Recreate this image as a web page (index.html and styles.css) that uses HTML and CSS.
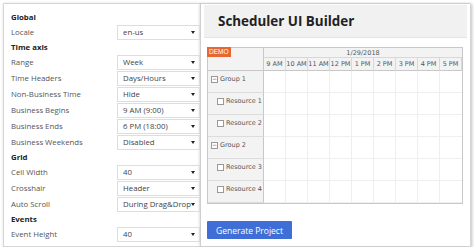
FILE: index.html
```html
<!DOCTYPE html>
<html lang="en">
<head>
    <meta charset="UTF-8">
    <title>Scheduler UI Builder</title>
    <link rel="stylesheet" href="styles.css">
</head>
<body>
    <div class="card">
        <div class="settings">
            <div class="heading">Global</div>
            <div class="row"><span>Locale</span><div class="select">en-us<i></i></div></div>
            <div class="heading">Time axis</div>
            <div class="row"><span>Range</span><div class="select">Week<i></i></div></div>
            <div class="row"><span>Time Headers</span><div class="select">Days/Hours<i></i></div></div>
            <div class="row"><span>Non-Business Time</span><div class="select">Hide<i></i></div></div>
            <div class="row"><span>Business Begins</span><div class="select">9 AM (9:00)<i></i></div></div>
            <div class="row"><span>Business Ends</span><div class="select">6 PM (18:00)<i></i></div></div>
            <div class="row"><span>Business Weekends</span><div class="select">Disabled<i></i></div></div>
            <div class="heading">Grid</div>
            <div class="row"><span>Cell Width</span><div class="select">40<i></i></div></div>
            <div class="row"><span>Crosshair</span><div class="select">Header<i></i></div></div>
            <div class="row"><span>Auto Scroll</span><div class="select">During Drag&amp;Drop<i></i></div></div>
            <div class="heading">Events</div>
            <div class="row"><span>Event Height</span><div class="select">40<i></i></div></div>
        </div>
        <div class="preview">
            <div class="preview-head">Scheduler UI Builder</div>
            <div class="scheduler">
                <span class="demo">DEMO</span>
                <div class="corner"></div>
                <div class="date">1/29/2018</div>
                <div class="hour">9 AM</div>
                <div class="hour">10 AM</div>
                <div class="hour">11 AM</div>
                <div class="hour">12 PM</div>
                <div class="hour">1 PM</div>
                <div class="hour">2 PM</div>
                <div class="hour">3 PM</div>
                <div class="hour">4 PM</div>
                <div class="hour">5 PM</div>
            </div>
            <div class="rows" id="rows"></div>
            <div class="actions">
                <button class="generate">Generate Project</button>
            </div>
        </div>
    </div>

    <script>
        const rows = document.getElementById('rows');
        const resources = [
            ['group', 'Group 1'],
            ['res', 'Resource 1'],
            ['res', 'Resource 2'],
            ['group', 'Group 2'],
            ['res', 'Resource 3'],
            ['res', 'Resource 4']
        ];

        for(let i = 0; i < resources.length; i++){
            const [type, name] = resources[i];
            const head = document.createElement('div');
            head.className = 'row-head ' + type;
            head.innerHTML = (type === 'group' ? '<b class="toggle">−</b>' : '<b class="box"></b>') + name;
            rows.appendChild(head);
            for(let c = 0; c < 9; c++){
                const cell = document.createElement('div');
                cell.className = 'cell';
                rows.appendChild(cell);
            }
        }
    </script>
</body>
</html>
```

FILE: styles.css
```css
body {
    margin: 0;
    font-family: "Open Sans", "Noto Sans", sans-serif;
    background: #fff;
    color: #333;
}
.card {
    margin: 3px 0 0 3px;
    width: 466px;
    height: 242px;
    display: flex;
    border: 1px solid #d6d6d6;
    box-shadow: 1px 1px 3px rgba(0,0,0,0.25);
    background: #fff;
}

.settings {
    width: 189px;
    padding: 6px 0 0 7px;
    font-size: 7.8px;
    color: #555;
}
.heading {
    height: 14px;
    line-height: 14px;
    font-weight: bold;
    color: #222;
}
.row {
    height: 16px;
    display: flex;
    align-items: center;
    justify-content: space-between;
}
.select {
    box-sizing: border-box;
    width: 83px;
    height: 15px;
    line-height: 13px;
    border: 1px solid #ddd;
    padding-left: 5px;
    position: relative;
    color: #444;
    white-space: nowrap;
}
.select i {
    position: absolute;
    right: 4px;
    top: 5px;
    border-left: 2px solid transparent;
    border-right: 2px solid transparent;
    border-top: 3px solid #222;
}

.preview {
    flex: 1;
    border-left: 1px solid #cfcfcf;
    box-shadow: -1px 0 2px rgba(0,0,0,0.12);
    padding: 1px 3px 0 3px;
    display: flex;
    flex-direction: column;
}
.preview-head {
    height: 32px;
    line-height: 33px;
    background: #f1f1f1;
    border-bottom: 1px solid #e4e4e4;
    padding-left: 14px;
    font-size: 13.4px;
    font-weight: bold;
    color: #222;
}

.scheduler {
    margin: 9px 0 0 3px;
    width: 254px;
    display: grid;
    grid-template-columns: 56px repeat(9, 22px);
    grid-template-rows: 10px 13px;
    border: 1px solid #c8c8c8;
    border-bottom: none;
    background: #f3f3f3;
    font-family: "DejaVu Sans", sans-serif;
    font-size: 6.5px;
    color: #555;
    position: relative;
}
.corner {
    grid-row: 1 / 3;
    border-right: 1px solid #c8c8c8;
    border-bottom: 1px solid #c8c8c8;
}
.date {
    grid-column: 2 / 11;
    text-align: center;
    line-height: 10px;
    border-bottom: 1px solid #d8d8d8;
}
.hour {
    text-align: center;
    line-height: 12px;
    border-right: 1px solid #d8d8d8;
    border-bottom: 1px solid #c8c8c8;
}
.demo {
    position: absolute;
    left: -1px;
    top: -1px;
    background: #e8662f;
    color: #fff;
    font-family: "Liberation Sans", sans-serif;
    font-size: 6.5px;
    padding: 1px 2px;
    line-height: 8px;
}

.rows {
    margin-left: 3px;
    width: 254px;
    display: grid;
    grid-template-columns: 56px repeat(9, 22px);
    grid-auto-rows: 22px;
    border: 1px solid #c8c8c8;
    border-top: none;
    font-family: "DejaVu Sans", sans-serif;
    font-size: 6.5px;
    color: #555;
}
.row-head {
    background: #f3f3f3;
    border-right: 1px solid #c8c8c8;
    border-bottom: 1px solid #dcdcdc;
    padding-top: 4px;
    display: flex;
    align-items: flex-start;
}
.row-head.group {
    padding-left: 3px;
}
.row-head.res {
    justify-content: flex-end;
    padding-right: 1px;
}
.toggle, .box {
    display: inline-block;
    width: 5px;
    height: 5px;
    border: 1px solid #999;
    margin: 1px 2px 0 0;
    font-size: 6px;
    line-height: 4px;
    text-align: center;
    font-weight: normal;
    background: #fff;
}
.cell {
    border-right: 1px solid #efefef;
    border-bottom: 1px solid #efefef;
}
.cell:nth-child(10n) {
    border-right: none;
}

.actions {
    margin: 17px 0 0 3px;
}
.generate {
    display: block;
    width: 85px;
    height: 18px;
    border: none;
    border-radius: 1px;
    background: #3f6fd6;
    color: #fff;
    font-family: "Open Sans", sans-serif;
    font-size: 8.5px;
    padding: 0;
}
```
